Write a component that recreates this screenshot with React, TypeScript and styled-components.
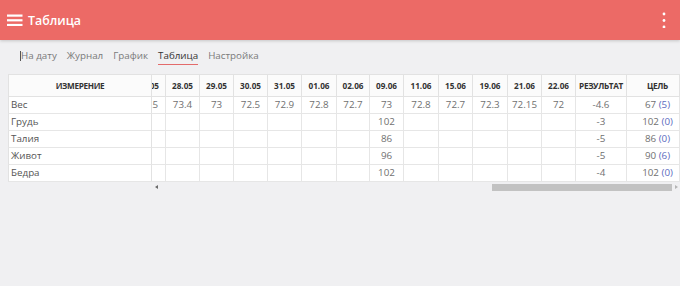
import { useLayoutEffect, useRef, useState } from "react";
import styled, { createGlobalStyle } from "styled-components";

const FIRST_COL = 144;

const GlobalStyle = createGlobalStyle`
    * { box-sizing: border-box; }
    body {
        margin: 0;
        background: #f0f0f2;
        font-family: "Open Sans", "Noto Sans", sans-serif;
        overflow: hidden;
    }
`;

const TopBar = styled.div`
    display: flex;
    align-items: center;
    height: 40px;
    padding: 0 14px 0 7px;
    background: #ec6a66;
    box-shadow: 0 1px 3px rgba(0, 0, 0, 0.18);
    color: #fff;
`;

const Title = styled.div`
    flex: 1;
    margin-left: 5px;
    font-size: 12.4px;
    font-weight: 600;
`;

const Tabs = styled.div`
    display: flex;
    align-items: flex-start;
    gap: 10px;
    height: 34px;
    padding: 9px 0 0 20px;
`;

const Caret = styled.span`
    width: 1px;
    height: 10px;
    margin: 2px -10px 0 0;
    background: #555;
`;

const Tab = styled.span<{ $active?: boolean }>`
    font-size: 9.8px;
    line-height: 14px;
    padding-bottom: 1px;
    color: ${p => p.$active ? '#333' : '#7a7a7a'};
    border-bottom: 1px solid ${p => p.$active ? '#e36b6b' : 'transparent'};
`;

const TableBox = styled.div`
    margin-left: 8px;
    width: 672px;
`;

const Scroller = styled.div`
    overflow-x: auto;
    scrollbar-width: none;
    &::-webkit-scrollbar { display: none; }
`;

const Table = styled.table`
    border-collapse: separate;
    border-spacing: 0;
    table-layout: fixed;
`;

const Head = styled.th<{ $w: number; $first?: boolean; $word?: boolean; $shift?: boolean }>`
    width: ${p => p.$w}px;
    min-width: ${p => p.$w}px;
    height: 23px;
    padding: 0 0 0 ${p => p.$shift ? 9 : 0}px;
    background: #fbfbfb;
    color: #333;
    font-size: 8.2px;
    font-weight: 700;
    letter-spacing: ${p => p.$word ? '-0.35px' : '0'};
    text-align: center;
    white-space: nowrap;
    overflow: hidden;
    border-top: 1px solid #e2e2e2;
    border-right: 1px solid #e2e2e2;
    border-bottom: 1px solid #e2e2e2;
    ${p => p.$first && `
        position: sticky;
        left: 0;
        z-index: 2;
        border-left: 1px solid #e2e2e2;
    `}
`;

const Cell = styled.td<{ $first?: boolean; $shift?: boolean }>`
    height: 17px;
    padding: 0 0 0 ${p => p.$shift ? 9 : 0}px;
    background: #fff;
    color: #707070;
    font-size: 9.8px;
    line-height: 16px;
    text-align: center;
    white-space: nowrap;
    overflow: hidden;
    border-right: 1px solid #e6e6e6;
    border-bottom: 1px solid #e6e6e6;
    ${p => p.$first && `
        position: sticky;
        left: 0;
        z-index: 2;
        text-align: left;
        padding-left: 2px;
        color: #555;
        border-left: 1px solid #e2e2e2;
        border-right-color: #e2e2e2;
    `}
`;

const Diff = styled.span`
    color: #5c6bc0;
`;

const ScrollBar = styled.div`
    display: flex;
    align-items: center;
    height: 10px;
    padding-left: ${FIRST_COL}px;
`;

const ArrowBtn = styled.span<{ $dir: 'left' | 'right' }>`
    display: flex;
    justify-content: center;
    width: 8px;

    &::before {
        content: "";
        border-top: 2px solid transparent;
        border-bottom: 2px solid transparent;
        ${p => p.$dir === 'left' ? 'border-right: 3px solid #6a6a6a;' : 'border-left: 3px solid #b5b5b5;'}
    }
`;

const Track = styled.div`
    flex: 1;
    display: flex;
    height: 7px;
`;

const Thumb = styled.div`
    height: 100%;
    background: #c2c2c2;
`;

const earlier = [
    '10.03', '12.03', '14.03', '17.03', '19.03', '21.03', '24.03', '26.03', '28.03', '31.03',
    '02.04', '04.04', '07.04', '09.04', '11.04', '14.04', '16.04', '18.04', '21.04', '23.04',
    '25.04', '28.04', '30.04', '05.05', '08.05', '12.05', '16.05', '20.05', '27.05',
];

const recent: [string, number][] = [
    ['28.05', 34], ['29.05', 34], ['30.05', 34], ['31.05', 34], ['01.06', 35], ['02.06', 33],
    ['09.06', 34], ['11.06', 35], ['15.06', 34], ['19.06', 35], ['21.06', 34], ['22.06', 34],
];

const dates = [...earlier.map(d => ({ d, w: 34 })), ...recent.map(([d, w]) => ({ d, w }))];

const weight: Record<string, number> = {
    '28.05': 73.4, '29.05': 73, '30.05': 72.5, '31.05': 72.9, '01.06': 72.8, '02.06': 72.7,
    '09.06': 73, '11.06': 72.8, '15.06': 72.7, '19.06': 72.3, '21.06': 72.15, '22.06': 72,
};
earlier.forEach((d, i) => { weight[d] = Number((76.6 - i * 0.11).toFixed(1)); });

interface Row {
    name: string;
    values: Record<string, number>;
    result: string;
    goal: number;
    diff: number;
}

const rows: Row[] = [
    { name: 'Вес', values: weight, result: '-4.6', goal: 67, diff: 5 },
    { name: 'Грудь', values: { '10.03': 105, '09.06': 102 }, result: '-3', goal: 102, diff: 0 },
    { name: 'Талия', values: { '10.03': 91, '09.06': 86 }, result: '-5', goal: 86, diff: 0 },
    { name: 'Живот', values: { '10.03': 101, '09.06': 96 }, result: '-5', goal: 90, diff: 6 },
    { name: 'Бедра', values: { '10.03': 106, '09.06': 102 }, result: '-4', goal: 102, diff: 0 },
];

function Hamburger() {
    return <svg width="16" height="12" viewBox="0 0 16 12">
        <rect x="0" y="0.5" width="15.5" height="2.2" fill="#fff" />
        <rect x="0" y="5.2" width="15.5" height="2.2" fill="#fff" />
        <rect x="0" y="9.9" width="15.5" height="2.2" fill="#fff" />
    </svg>
}

function MoreIcon() {
    return <svg width="4" height="16" viewBox="0 0 4 16">
        <circle cx="2" cy="2" r="1.4" fill="#fff" />
        <circle cx="2" cy="8.5" r="1.4" fill="#fff" />
        <circle cx="2" cy="15" r="1.4" fill="#fff" />
    </svg>
}

export default function App() {
    const ref = useRef<HTMLDivElement>(null);
    const [thumb, setThumb] = useState({ width: 0, offset: 0 });

    const measure = () => {
        const el = ref.current;
        if (!el) return;
        const track = el.clientWidth - FIRST_COL - 16;
        const visible = el.clientWidth - FIRST_COL;
        const total = el.scrollWidth - FIRST_COL;
        const width = Math.round(track * visible / total);
        const max = el.scrollWidth - el.clientWidth;
        const offset = max > 0 ? Math.round(el.scrollLeft / max * (track - width)) : 0;
        setThumb({ width, offset });
    }

    useLayoutEffect(() => {
        if (ref.current) {
            ref.current.scrollLeft = ref.current.scrollWidth;
        }
        measure();
    }, []);

    const tableWidth = FIRST_COL + dates.reduce((s, c) => s + c.w, 0) + 51 + 53;

    return <>
        <GlobalStyle />
        <TopBar>
            <Hamburger />
            <Title>Таблица</Title>
            <MoreIcon />
        </TopBar>
        <Tabs>
            <Caret />
            <Tab>На дату</Tab>
            <Tab>Журнал</Tab>
            <Tab>График</Tab>
            <Tab $active>Таблица</Tab>
            <Tab>Настройка</Tab>
        </Tabs>
        <TableBox>
            <Scroller ref={ref} onScroll={measure}>
                <Table style={{ width: tableWidth }}>
                    <thead>
                        <tr>
                            <Head $w={FIRST_COL} $first $word>ИЗМЕРЕНИЕ</Head>
                            {dates.map(c => <Head key={c.d} $w={c.w}>{c.d}</Head>)}
                            <Head $w={51} $word>РЕЗУЛЬТАТ</Head>
                            <Head $w={53} $word $shift>ЦЕЛЬ</Head>
                        </tr>
                    </thead>
                    <tbody>
                        {rows.map(r => <tr key={r.name}>
                            <Cell $first>{r.name}</Cell>
                            {dates.map(c => <Cell key={c.d}>{r.values[c.d] ?? ''}</Cell>)}
                            <Cell>{r.result}</Cell>
                            <Cell $shift>{r.goal} <Diff>({r.diff})</Diff></Cell>
                        </tr>)}
                    </tbody>
                </Table>
            </Scroller>
            <ScrollBar>
                <ArrowBtn $dir="left" />
                <Track>
                    <Thumb style={{ width: thumb.width, marginLeft: thumb.offset }} />
                </Track>
                <ArrowBtn $dir="right" />
            </ScrollBar>
        </TableBox>
    </>
}
